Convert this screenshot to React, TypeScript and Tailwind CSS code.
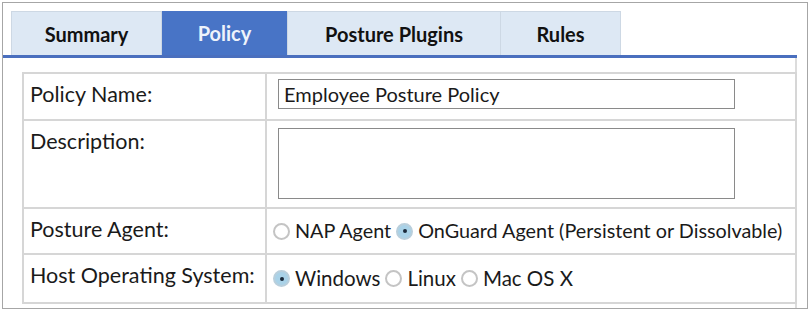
import React from "react";

function Radio({ checked }: { checked?: boolean }) {
  return (
    <span
      className={
        "inline-flex items-center justify-center w-[17px] h-[17px] rounded-full border-2 shrink-0 " +
        (checked ? "border-[#b9cfdc] bg-[#a9d2e8]" : "border-[#c4c4c4] bg-white")
      }
    >
      {checked && <span className="block w-[4px] h-[4px] rounded-full bg-[#1a2a3a]" />}
    </span>
  );
}

export default function App() {
  const font = { fontFamily: "Lato, 'Noto Sans', sans-serif" };
  return (
    <div className="w-[811px] h-[311px] bg-white p-[2px]" style={font}>
      <div className="w-[806px] h-[307px] border border-[#a6a6a6] flex flex-col">
        <div className="flex pl-[8px] pt-[7px] h-[52px] items-end">
          <div className="w-[151px] h-[44px] flex items-center justify-center bg-[#dde8f4] border border-[#cdd8e4] border-b-0 text-[20px] font-bold text-[#111]">
            Summary
          </div>
          <div className="w-[125px] h-[44px] flex items-center justify-center bg-[#4874c6] text-[20px] font-bold text-[#eef3fb]">
            Policy
          </div>
          <div className="w-[214px] h-[44px] flex items-center justify-center bg-[#dde8f4] border border-[#cdd8e4] border-b-0 text-[20px] font-bold text-[#111]">
            Posture Plugins
          </div>
          <div className="w-[120px] h-[44px] flex items-center justify-center bg-[#dde8f4] border border-[#cdd8e4] border-b-0 border-l-0 text-[20px] font-bold text-[#111]">
            Rules
          </div>
        </div>
        <div className="w-[794px] h-[3px] bg-[#4a6fbe]" />
        <div className="w-[794px] flex-1 border-r-2 border-[#dcdcdc] pl-[19px] pt-[14px]">
          <div className="w-[775px] border-2 border-[#d6d6d6] grid grid-cols-[243px_1fr] text-[20.5px] text-[#1a1a1a] whitespace-nowrap">
            <div className="h-[47px] border-r-2 border-b-2 border-[#d6d6d6] pl-[6px] pt-[4px] text-[21.5px]">Policy Name:</div>
            <div className="h-[47px] border-b-2 border-[#d6d6d6] pl-[11px] pt-[5px]">
              <div className="w-[457px] h-[30px] border border-[#8a8a8a] pl-[5px] leading-[28px] text-[20px]">Employee Posture Policy</div>
            </div>
            <div className="h-[88px] border-r-2 border-b-2 border-[#d6d6d6] pl-[6px] pt-[4px] text-[21.5px]">Description:</div>
            <div className="h-[88px] border-b-2 border-[#d6d6d6] pl-[11px] pt-[7px]">
              <div className="w-[457px] h-[71px] border border-[#8a8a8a]" />
            </div>
            <div className="h-[46px] border-r-2 border-b-2 border-[#d6d6d6] pl-[6px] pt-[4px] text-[21.5px]">Posture Agent:</div>
            <div className="h-[46px] border-b-2 border-[#d6d6d6] pl-[6px] flex items-center gap-[5px] text-[19.8px]">
              <Radio />
              <span>NAP Agent</span>
              <Radio checked />
              <span>OnGuard Agent (Persistent or Dissolvable)</span>
            </div>
            <div className="h-[47px] border-r-2 border-[#d6d6d6] pl-[6px] pt-[4px] text-[21.5px]">Host Operating System:</div>
            <div className="h-[47px] pl-[6px] flex items-center gap-[5px]">
              <Radio checked />
              <span>Windows</span>
              <Radio />
              <span>Linux</span>
              <Radio />
              <span>Mac OS X</span>
            </div>
          </div>
        </div>
      </div>
    </div>
  );
}
